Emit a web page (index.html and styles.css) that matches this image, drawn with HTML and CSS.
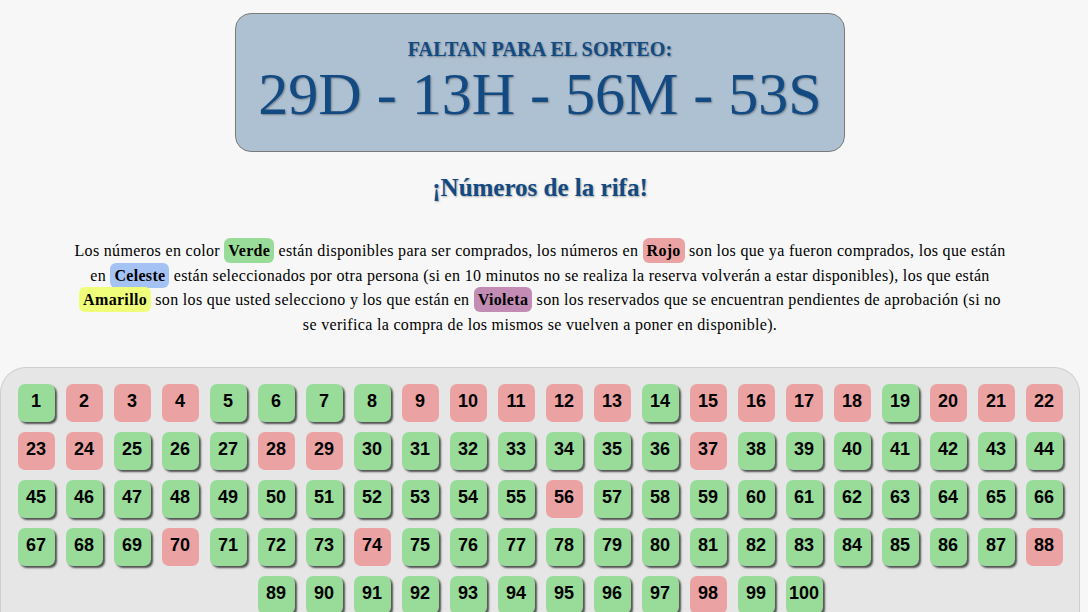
FILE: index.html
```html
<!DOCTYPE html>
<html lang="es">
<head>
<meta charset="utf-8">
<title>Rifa</title>
<link rel="stylesheet" href="styles.css">
</head>
<body>
<div class="page">
  <div class="countdown">
    <div class="countdown-label">FALTAN PARA EL SORTEO:</div>
    <div class="countdown-time">29D - 13H - 56M - 53S</div>
  </div>
  <h2 class="title">¡Números de la rifa!</h2>
  <p class="legend">Los números en color <span class="tag tag-green">Verde</span> están disponibles para ser comprados, los números en <span class="tag tag-red">Rojo</span> son los que ya fueron comprados, los que están en <span class="tag tag-blue">Celeste</span> están seleccionados por otra persona (si en 10 minutos no se realiza la reserva volverán a estar disponibles), los que están <span class="tag tag-yellow">Amarillo</span> son los que usted selecciono y los que están en <span class="tag tag-violet">Violeta</span> son los reservados que se encuentran pendientes de aprobación (si no se verifica la compra de los mismos se vuelven a poner en disponible).</p>
  <div class="panel">
    <div class="grid">
      <span class="num free">1</span><span class="num sold">2</span><span class="num sold">3</span><span class="num sold">4</span><span class="num free">5</span><span class="num free">6</span><span class="num free">7</span><span class="num free">8</span><span class="num sold">9</span><span class="num sold">10</span>
      <span class="num sold">11</span><span class="num sold">12</span><span class="num sold">13</span><span class="num free">14</span><span class="num sold">15</span><span class="num sold">16</span><span class="num sold">17</span><span class="num sold">18</span><span class="num free">19</span><span class="num sold">20</span>
      <span class="num sold">21</span><span class="num sold">22</span><span class="num sold">23</span><span class="num sold">24</span><span class="num free">25</span><span class="num free">26</span><span class="num free">27</span><span class="num sold">28</span><span class="num sold">29</span><span class="num free">30</span>
      <span class="num free">31</span><span class="num free">32</span><span class="num free">33</span><span class="num free">34</span><span class="num free">35</span><span class="num free">36</span><span class="num sold">37</span><span class="num free">38</span><span class="num free">39</span><span class="num free">40</span>
      <span class="num free">41</span><span class="num free">42</span><span class="num free">43</span><span class="num free">44</span><span class="num free">45</span><span class="num free">46</span><span class="num free">47</span><span class="num free">48</span><span class="num free">49</span><span class="num free">50</span>
      <span class="num free">51</span><span class="num free">52</span><span class="num free">53</span><span class="num free">54</span><span class="num free">55</span><span class="num sold">56</span><span class="num free">57</span><span class="num free">58</span><span class="num free">59</span><span class="num free">60</span>
      <span class="num free">61</span><span class="num free">62</span><span class="num free">63</span><span class="num free">64</span><span class="num free">65</span><span class="num free">66</span><span class="num free">67</span><span class="num free">68</span><span class="num free">69</span><span class="num sold">70</span>
      <span class="num free">71</span><span class="num free">72</span><span class="num free">73</span><span class="num sold">74</span><span class="num free">75</span><span class="num free">76</span><span class="num free">77</span><span class="num free">78</span><span class="num free">79</span><span class="num free">80</span>
      <span class="num free">81</span><span class="num free">82</span><span class="num free">83</span><span class="num free">84</span><span class="num free">85</span><span class="num free">86</span><span class="num free">87</span><span class="num sold">88</span><span class="num free">89</span><span class="num free">90</span>
      <span class="num free">91</span><span class="num free">92</span><span class="num free">93</span><span class="num free">94</span><span class="num free">95</span><span class="num free">96</span><span class="num free">97</span><span class="num sold">98</span><span class="num free">99</span><span class="num free">100</span>
    </div>
  </div>
</div>
</body>
</html>
```
FILE: styles.css
```css
html, body {
  margin: 0;
  padding: 0;
}
body {
  background: #f7f7f7;
  font-family: "Liberation Serif", "Times New Roman", serif;
  color: #000;
  overflow: hidden;
}
.page {
  width: 1080px;
}
.countdown {
  box-sizing: border-box;
  width: 610px;
  margin: 13px auto 0;
  padding: 23px 0 24px;
  background: #aec1d3;
  border: 1px solid #7a7a7a;
  border-radius: 16px;
  text-align: center;
  color: #134a82;
  text-shadow: 1px 1px 2px rgba(0, 0, 0, 0.35);
}
.countdown-label {
  font-size: 20px;
  font-weight: bold;
  line-height: 24px;
  letter-spacing: 0.2px;
}
.countdown-time {
  font-size: 60px;
  line-height: 66px;
}
.title {
  margin: 21px 0 0;
  font-size: 25px;
  line-height: 30px;
  font-weight: bold;
  text-align: center;
  color: #134a82;
  text-shadow: 1px 1px 2px rgba(0, 0, 0, 0.3);
}
.legend {
  width: 936px;
  margin: 36px auto 0;
  font-size: 16px;
  line-height: 24.5px;
  letter-spacing: 0.32px;
  text-align: center;
}
.tag {
  font-weight: bold;
  padding: 4px 4px;
  border-radius: 6px;
}
.tag-green { background: #99dc9a; }
.tag-red { background: #eba2a2; }
.tag-blue { background: #a4c2f4; }
.tag-yellow { background: #efff7a; }
.tag-violet { background: #c28cb5; }
.panel {
  margin-top: 30px;
  background: #e6e6e6;
  border: 1px solid #cfcfcf;
  border-bottom: none;
  border-radius: 26px 26px 0 0;
  padding: 16px 0 20px;
}
.grid {
  display: flex;
  flex-wrap: wrap;
  justify-content: center;
  gap: 10px 11px;
}
.num {
  box-sizing: border-box;
  width: 37px;
  height: 38px;
  padding-bottom: 4px;
  line-height: 34px;
  text-align: center;
  border-radius: 7px;
  font-family: "Liberation Sans", Arial, sans-serif;
  font-weight: bold;
  font-size: 18px;
  color: #000;
}
.free {
  background: #99dc9a;
  box-shadow: 2px 2px 2px rgba(0, 0, 0, 0.65);
}
.sold {
  background: #eba2a2;
}
```
